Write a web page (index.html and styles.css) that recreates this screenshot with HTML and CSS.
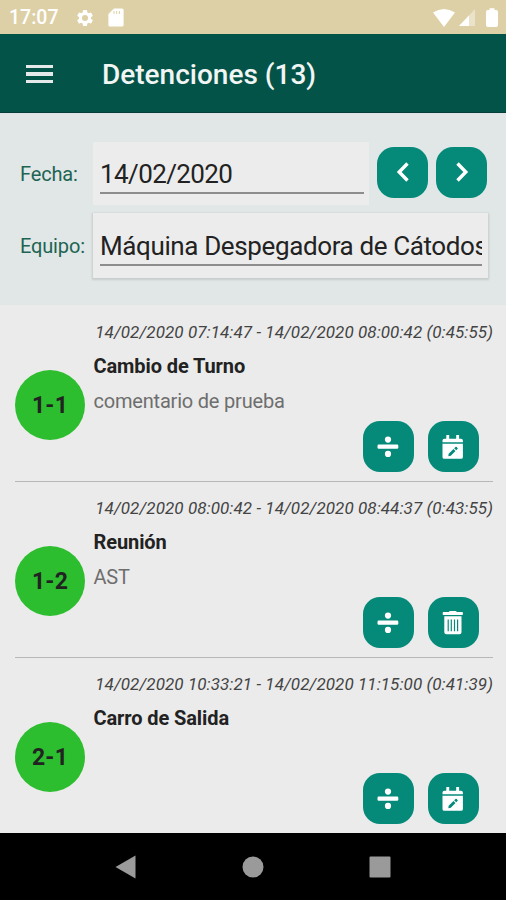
FILE: index.html
```html
<!DOCTYPE html>
<html lang="es">
	<head>
		<meta charset="utf-8" />
		<meta name="viewport" content="width=device-width, initial-scale=1">
		<title>Detenciones</title>
		<link rel="stylesheet" href="styles.css">
	</head>
	<body>
		<!-- iconos compartidos -->
		<svg class="sprite">
			<symbol id="divide" viewBox="0 0 24 24">
				<circle cx="12" cy="4.600" r="3.1" />
				<rect x="1.500" y="9.500" width="20.800" height="4.2" rx="1.2" />
				<circle cx="12" cy="18.900" r="3.1" />
			</symbol>
			<symbol id="calendar" viewBox="0 0 24 24">
				<path d="M1.500 7.3V5.6q0-1.900 1.900-1.900h1.900V.6q0-.9.9-.9h1.100q.9 0 .9.9v3.100h7V.6q0-.9.9-.9h1.100q.9 0 .9.9v3.100h1.900q1.900 0 1.900 1.900v1.700z" />
				<path fill-rule="evenodd" d="M1.500 8.700h20.400v13.200q0 1.900-1.900 1.900H3.400q-1.900 0-1.900-1.900zM7.300 21.200l2.500-.4 4.700-4.700-2-2-4.800 4.700zM13.200 13.300l2 2 1.300-1.200q.6-.6 0-1.200l-.8-.8q-.6-.6-1.200 0z" />
			</symbol>
			<symbol id="trash" viewBox="0 0 24 24">
				<path d="M1.700 1.700q0-.7.7-.7h5.500l.5-.8q.2-.4.8-.4h5.200q.6 0 .8.4l.5.800h5.500q.7 0 .7.7v1.500q0 .7-.7.7H2.400q-.7 0-.7-.7z" />
				<path fill-rule="evenodd" d="M3.300 5.200h17.200v16q0 2.100-2.100 2.100H5.400q-2.100 0-2.100-2.100zM6.600 8.600v11.600h1.200V8.600zM9.700 8.600v11.600h1.200V8.600zM12.900 8.600v11.600h1.200V8.600zM16 8.600v11.600h1.200V8.600z" />
			</symbol>
		</svg>

		<div class="status">
			<span class="hour">17:07</span>
			<svg class="gear" viewBox="0 0 24 24"><path d="M19.14 12.94c.04-.3.06-.61.06-.94s-.02-.64-.07-.94l2.03-1.58c.18-.14.23-.41.12-.61l-1.92-3.32c-.12-.22-.37-.29-.59-.22l-2.39.96c-.5-.38-1.03-.7-1.62-.94l-.36-2.54c-.04-.24-.24-.41-.48-.41h-3.84c-.24 0-.43.17-.47.41l-.36 2.54c-.59.24-1.13.57-1.62.94l-2.39-.96c-.22-.08-.47 0-.59.22L2.74 8.87c-.12.21-.08.47.12.61l2.03 1.58c-.05.3-.09.63-.09.94s.02.64.07.94l-2.03 1.58c-.18.14-.23.41-.12.61l1.92 3.32c.12.22.37.29.59.22l2.39-.96c.5.38 1.03.7 1.62.94l.36 2.54c.05.24.24.41.48.41h3.84c.24 0 .44-.17.47-.41l.36-2.54c.59-.24 1.13-.56 1.62-.94l2.39.96c.22.08.47 0 .59-.22l1.92-3.32c.12-.22.07-.47-.12-.61zM12 15.6A3.6 3.6 0 1 1 12 8.4a3.6 3.6 0 0 1 0 7.2z" /></svg>
			<svg class="card" viewBox="0 0 16 19"><path d="M6 .5h8q1.6 0 1.6 1.6v14.8q0 1.6-1.6 1.6H2Q.4 18.500.4 16.900V6z" /><path class="slots" d="M6 3v3M8.700 3v3M11.400 3v3" /></svg>
			<div class="signals">
				<svg class="wifi" viewBox="0 0 22 18"><path d="M0 3.500Q11-3.500 22 3.500L11 18z" /></svg>
				<svg class="cell" viewBox="0 0 16 17"><path class="dim" d="M0 17L16 0v17z" /><path d="M0 17L10 6.400V17z" /></svg>
				<svg class="battery" viewBox="0 0 12 19"><path d="M3.500 2V.3h5V2h1.700Q12 2 12 3.800v13.400q0 1.800-1.800 1.800H1.800Q0 19 0 17.200V3.800Q0 2 1.800 2z" /></svg>
			</div>
		</div>

		<div class="header">
			<div class="menu"><i></i><i></i><i></i></div>
			<h1>Detenciones (13)</h1>
		</div>

		<div class="filter">
			<div class="row">
				<label>Fecha:</label>
				<div class="box date"><div class="value">14/02/2020</div></div>
				<div class="arrows">
					<a class="btn"><svg viewBox="0 0 24 24"><path class="line" d="M16.500 3.500L8.200 12l8.300 8.500" /></svg></a>
					<a class="btn"><svg viewBox="0 0 24 24"><path class="line" d="M7.500 3.500L15.800 12l-8.300 8.500" /></svg></a>
				</div>
			</div>
			<div class="row">
				<label>Equipo:</label>
				<div class="box team"><div class="value">Máquina Despegadora de Cátodos</div></div>
			</div>
		</div>

		<div class="list">
			<div class="item">
				<div class="code">1-1</div>
				<div class="info">
					<p class="time">14/02/2020 07:14:47 - 14/02/2020 08:00:42 (0:45:55)</p>
					<h2>Cambio de Turno</h2>
					<p class="note">comentario de prueba</p>
					<div class="actions">
						<a class="btn"><svg><use href="#divide" /></svg></a>
						<a class="btn"><svg><use href="#calendar" /></svg></a>
					</div>
				</div>
			</div>
			<div class="item">
				<div class="code">1-2</div>
				<div class="info">
					<p class="time">14/02/2020 08:00:42 - 14/02/2020 08:44:37 (0:43:55)</p>
					<h2>Reunión</h2>
					<p class="note">AST</p>
					<div class="actions">
						<a class="btn"><svg><use href="#divide" /></svg></a>
						<a class="btn"><svg><use href="#trash" /></svg></a>
					</div>
				</div>
			</div>
			<div class="item">
				<div class="code">2-1</div>
				<div class="info">
					<p class="time">14/02/2020 10:33:21 - 14/02/2020 11:15:00 (0:41:39)</p>
					<h2>Carro de Salida</h2>
					<p class="note"></p>
					<div class="actions">
						<a class="btn"><svg><use href="#divide" /></svg></a>
						<a class="btn"><svg><use href="#calendar" /></svg></a>
					</div>
				</div>
			</div>
		</div>

		<div class="nav">
			<svg viewBox="0 0 24 24"><path d="M1.500 12L21.500.5v23z" /></svg>
			<svg viewBox="0 0 24 24"><circle cx="12" cy="12" r="10.500" /></svg>
			<svg viewBox="0 0 24 24"><rect x="1.500" y="1.500" width="21" height="21" rx="1" /></svg>
		</div>
	</body>
</html>
```
FILE: styles.css
```css
* {
	padding: 0;
	margin: 0;
	box-sizing: border-box;
}

body {
	width: 506px;
	height: 900px;
	overflow: hidden;
	display: flex;
	flex-direction: column;
	background-color: #ebebeb;
	font-family: Roboto, "Liberation Sans", sans-serif;
	color: #222;
}

svg {
	display: block;
	fill: #fff;
}

.sprite {
	display: none;
}

/* barra de estado */
.status {
	height: 34px;
	flex: none;
	display: flex;
	align-items: center;
	padding: 1px 8px 0 9px;
	background-color: #ddd0a6;
	color: #fff;
}

.hour {
	width: 66px;
	font-size: 19.5px;
	font-weight: 500;
}

.gear {
	width: 20px;
	height: 20px;
}

.card {
	width: 16px;
	height: 19px;
	margin-left: 13px;
}

.slots {
	stroke: #ddd0a6;
	stroke-width: 1;
}

.signals {
	margin-left: auto;
	display: flex;
	align-items: center;
}

.wifi {
	width: 22px;
	height: 18px;
}

.cell {
	width: 16px;
	height: 17px;
	margin: 0 11px 0 4px;
}

.dim {
	opacity: 0.4;
}

.battery {
	width: 12px;
	height: 19px;
}

/* cabecera */
.header {
	height: 79px;
	flex: none;
	display: flex;
	align-items: center;
	padding: 2px 0 0 26px;
	background-color: #045348;
	border-bottom: 1px solid #063f38;
	color: #f1f5f4;
}

.menu {
	width: 76px;
	display: flex;
	flex-direction: column;
	gap: 4px;
}

.menu i {
	width: 27px;
	height: 3.5px;
	background-color: #e6e9e9;
}

.header h1 {
	font-size: 28px;
	font-weight: 500;
}

/* filtros */
.filter {
	height: 192px;
	flex: none;
	padding: 28px 18px 0 20px;
	background-color: #e1e7e7;
	border-top: 1px solid #dfe2e8;
	display: flex;
	flex-direction: column;
	gap: 9px;
}

.row {
	display: flex;
	align-items: center;
	height: 63px;
}

.row label {
	width: 73px;
	flex: none;
	color: #1d6452;
	font-size: 20px;
	letter-spacing: -0.15px;
}

.box {
	height: 63px;
	padding: 9px 5px 0 7px;
	background-color: #ececec;
}

.date {
	width: 276px;
	letter-spacing: -0.6px;
}

.team {
	flex: 1;
	height: 65px;
	min-width: 0;
	padding: 10px 6px 0 7px;
	box-shadow: 0 1px 2px 1px rgba(0, 0, 0, 0.12);
	letter-spacing: -0.38px;
}

.value {
	height: 43px;
	line-height: 47px;
	border-bottom: 2px solid #8d8d8d;
	font-size: 26px;
	white-space: nowrap;
	overflow: hidden;
}

.arrows {
	display: flex;
	gap: 8px;
	margin: -3px 0 0 8px;
}

.btn {
	width: 51px;
	height: 51px;
	flex: none;
	border-radius: 17px;
	background-color: #058a7a;
	display: flex;
	align-items: center;
	justify-content: center;
}

.btn svg {
	width: 24px;
	height: 24px;
	overflow: visible;
}

.line {
	fill: none;
	stroke: #fff;
	stroke-width: 3.4;
}

/* listado */
.list {
	flex: 1;
	min-height: 0;
	padding: 1px 13px 0 15px;
}

.item {
	height: 176px;
	display: flex;
	border-bottom: 1px solid #b8b8b8;
}

.item:last-child {
	height: 175px;
	border-bottom: 1px solid transparent;
}

.code {
	width: 70px;
	height: 70px;
	flex: none;
	margin: 64px 8.5px 0 0;
	line-height: 71px;
	border-radius: 50%;
	background-color: #2dbe2f;
	text-align: center;
	font-size: 23px;
	font-weight: 700;
	letter-spacing: 0.2px;
}

.info {
	flex: 1;
	padding-top: 15px;
}

.time {
	height: 22px;
	line-height: 22px;
	text-align: right;
	font-size: 17px;
	letter-spacing: 0.07px;
	font-style: italic;
	white-space: nowrap;
	color: #444;
}

.info h2 {
	margin-top: 11px;
	height: 24px;
	line-height: 24px;
	font-size: 20px;
	font-weight: 700;
	letter-spacing: -0.1px;
}

.note {
	margin-top: 11px;
	height: 24px;
	line-height: 24px;
	font-size: 20px;
	letter-spacing: -0.2px;
	color: #6e6e6e;
}

.actions {
	display: flex;
	justify-content: flex-end;
	gap: 14px;
	margin: 8px 14.5px 0 0;
}

/* barra de navegacion */
.nav {
	height: 67px;
	flex: none;
	display: flex;
	align-items: center;
	justify-content: center;
	gap: 103px;
	background-color: #000;
}

.nav svg {
	width: 24px;
	height: 24px;
	fill: #9a9a9a;
}
```
